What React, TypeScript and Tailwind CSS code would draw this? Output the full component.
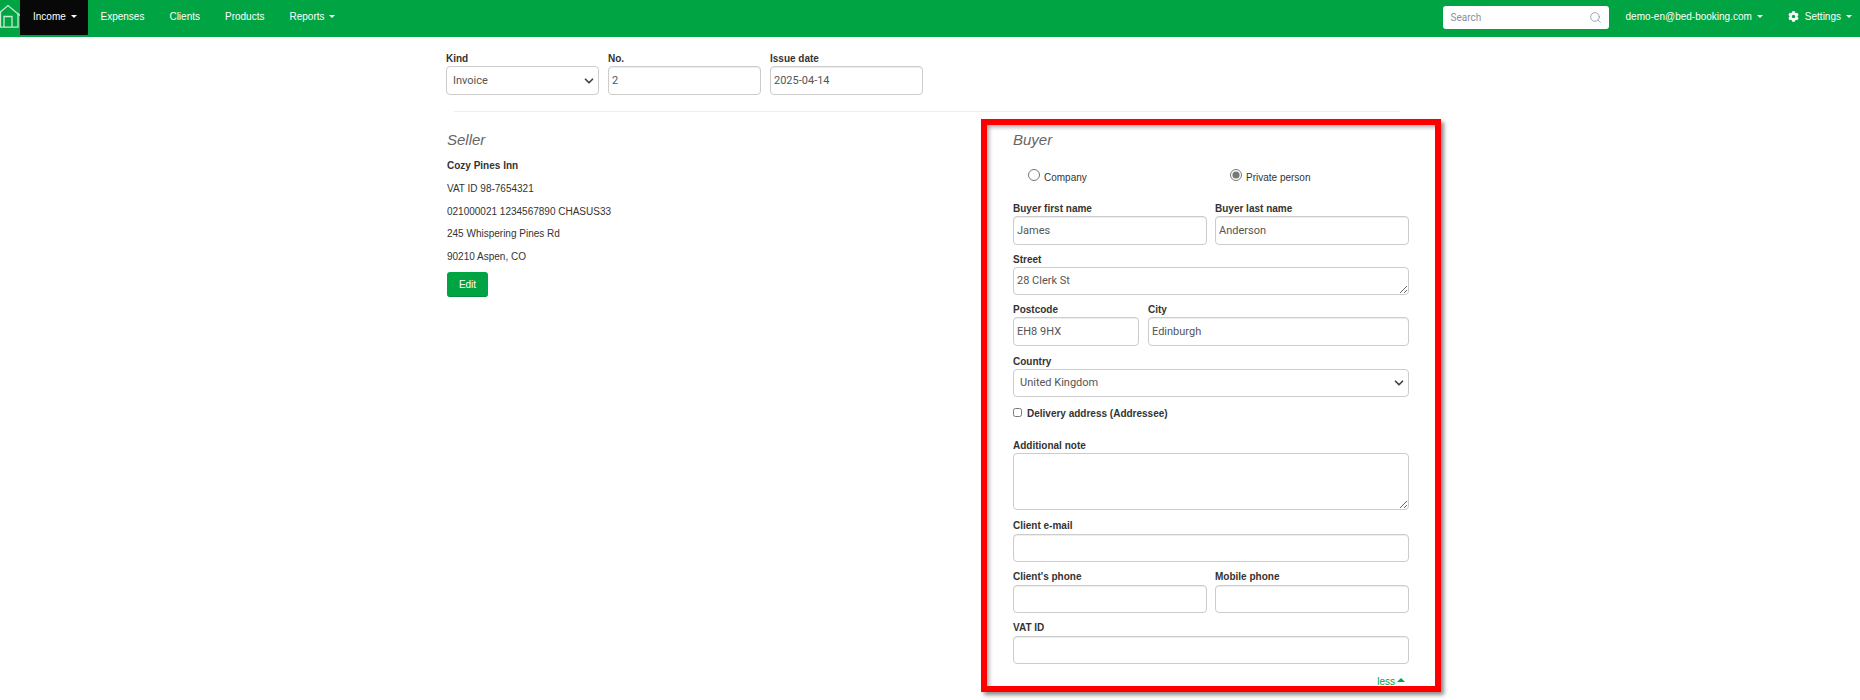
import { ChevronDown, Search } from "lucide-react";
import { FaCog } from "react-icons/fa";

function Caret({ up }: { up?: boolean }) {
  return up ? (
    <span className="inline-block w-0 h-0 border-x-[4px] border-x-transparent border-b-[4px] border-b-[#00a443]" />
  ) : (
    <span className="inline-block w-0 h-0 border-x-[3px] border-x-transparent border-t-[3px] border-t-white" />
  );
}

function NavItem({ label, caret }: { label: string; caret?: boolean }) {
  return (
    <a className="flex items-center gap-[5px] h-[32px] px-[12.5px] text-white">
      {label}
      {caret && <Caret />}
    </a>
  );
}

function Field({
  label,
  value,
  className,
  compact,
}: {
  label: string;
  value?: string;
  className?: string;
  compact?: boolean;
}) {
  return (
    <label className={`block ${className ?? ""}`}>
      <span className={`block font-bold text-[10px] text-[#333] ${compact ? "h-[15px] leading-[14px]" : "h-[14px] leading-[14px]"}`}>
        {label}
      </span>
      <input
        defaultValue={value}
        className={`block w-full px-[3px] bg-white border border-[#ccc] rounded-[4px] shadow-[inset_0_1px_1px_rgba(0,0,0,0.075)] font-['Roboto',sans-serif] text-[11px] text-[#555] ${compact ? "h-[28px]" : "h-[29px]"}`}
      />
    </label>
  );
}

function SelectField({ label, value, height }: { label: string; value: string; height: string }) {
  return (
    <label className="block">
      <span className="block h-[14px] leading-[14px] font-bold text-[10px] text-[#333]">{label}</span>
      <span className="relative block">
        <select
          defaultValue={value}
          className={`block w-full ${height} pl-[6px] pt-[1px] appearance-none bg-white border border-[#ccc] rounded-[4px] font-['Roboto',sans-serif] text-[11px] text-[#555]`}
        >
          <option>{value}</option>
        </select>
        <ChevronDown
          size={14}
          strokeWidth={3}
          className="absolute right-[3px] top-1/2 -translate-y-1/2 text-[#444] pointer-events-none"
        />
      </span>
    </label>
  );
}

function App() {
  return (
    <div className="min-h-[700px] bg-white font-['Liberation_Sans',Arial,sans-serif] text-[10px] text-[#333]">
      {/* Top bar */}
      <nav className="flex items-start h-[37px] bg-[#00a443] text-[10px]">
        <svg width="20" height="28" viewBox="0 0 20 28" className="shrink-0" fill="none" stroke="#c4eacf" strokeWidth="1.3">
          <path d="M-2 14 L8 5.5 L20 15.5" />
          <path d="M0.5 12 V27.2 H18 V13" />
          <path d="M4 27 V16.5 H12 V27" />
        </svg>
        <a className="flex items-center gap-[5px] w-[68px] h-[35px] pb-[3px] pl-[13px] bg-[#080808] text-white">
          Income
          <Caret />
        </a>
        <NavItem label="Expenses" />
        <NavItem label="Clients" />
        <NavItem label="Products" />
        <NavItem label="Reports" caret />

        <div className="ml-auto flex items-center h-[32px]">
          <div className="flex items-center w-[166px] h-[23px] mt-[3px] pl-[8px] pr-[7px] bg-white rounded-[3px]">
            <span className="flex-1 text-[#8a8f99] text-[10px] font-['Roboto',sans-serif]">Search</span>
            <Search size={13} strokeWidth={1.5} className="text-[#8a96a8]" />
          </div>
          <a className="flex items-center gap-[5px] ml-[17px] text-white">
            demo-en@bed-booking.com
            <Caret />
          </a>
          <a className="flex items-center ml-[25px] mr-[8px] text-white">
            <FaCog size={11} className="mr-[6px]" />
            Settings
            <span className="ml-[5px] flex items-center">
              <Caret />
            </span>
          </a>
        </div>
      </nav>

      <main className="w-[968px] mx-auto">
        {/* Document head */}
        <div className="flex gap-[9px] pt-[15px]">
          <div className="w-[153px]">
            <SelectField label="Kind" value="Invoice" height="h-[29px]" />
          </div>
          <Field label="No." value="2" className="w-[153px]" />
          <Field label="Issue date" value="2025-04-14" className="w-[153px]" />
        </div>

        <hr className="ml-[8px] mr-[14px] mt-[16px] border-t border-[#eee]" />

        <div className="flex">
          {/* Seller */}
          <section className="w-[535px] shrink-0 pl-[1px]">
            <h3 className="mt-[18px] text-[15px] leading-[20px] italic text-[#666]">Seller</h3>
            <p className="mt-[9px] leading-[13px] font-bold">Cozy Pines Inn</p>
            <p className="mt-[10px] leading-[13px]">VAT ID 98-7654321</p>
            <p className="mt-[10px] leading-[13px]">021000021 1234567890 CHASUS33</p>
            <p className="mt-[9px] leading-[13px]">245 Whispering Pines Rd</p>
            <p className="mt-[10px] leading-[13px]">90210 Aspen, CO</p>
            <button className="block mt-[9px] w-[41px] h-[25px] bg-[#00a443] border-b border-[#008f3a] rounded-[3px] text-white text-[10px]">
              Edit
            </button>
          </section>

          {/* Buyer */}
          <section className="w-[460px] h-[573px] shrink-0 mt-[7px] pl-[26px] pr-[26px] border-[6px] border-[#ff0000] shadow-[3px_3px_4px_rgba(0,0,0,0.45),inset_3px_3px_4px_-1px_rgba(0,0,0,0.35)]">
            <h3 className="mt-[5px] text-[15px] leading-[20px] italic text-[#666]">Buyer</h3>

            <div className="flex mt-[17px] h-[18px] text-[10px]">
              <label className="flex items-center w-[217px] pl-[15px]">
                <input type="radio" name="kind" className="m-0 w-[12px] h-[12px] mr-[4px] mb-[2px] accent-[#777]" />
                <span className="mt-[2px]">Company</span>
              </label>
              <label className="flex items-center">
                <input type="radio" name="kind" defaultChecked className="m-0 w-[12px] h-[12px] mr-[4px] mb-[2px] accent-[#777]" />
                <span className="mt-[2px]">Private person</span>
              </label>
            </div>

            <div className="flex gap-[8px] mt-[17px]">
              <Field label="Buyer first name" value="James" className="w-[194px]" />
              <Field label="Buyer last name" value="Anderson" className="w-[194px]" />
            </div>

            <label className="block mt-[8px]">
              <span className="block h-[14px] leading-[14px] font-bold text-[10px] text-[#333]">Street</span>
              <textarea
                defaultValue="28 Clerk St"
                className="block w-full h-[28px] px-[3px] py-[5px] bg-white border border-[#ccc] rounded-[4px] font-['Roboto',sans-serif] text-[11px] leading-[16px] text-[#555]"
              />
            </label>

            <div className="flex gap-[9px] mt-[8px]">
              <Field label="Postcode" value="EH8 9HX" className="w-[126px]" />
              <Field label="City" value="Edinburgh" className="w-[261px]" />
            </div>

            <div className="mt-[9px]">
              <SelectField label="Country" value="United Kingdom" height="h-[28px]" />
            </div>

            <label className="flex items-center mt-[10px] h-[13px] font-bold">
              <input type="checkbox" className="m-0 w-[9px] h-[9px] mr-[5px] mb-[2px]" />
              Delivery address (Addressee)
            </label>

            <label className="block mt-[19px]">
              <span className="block h-[14px] leading-[14px] font-bold text-[10px] text-[#333]">Additional note</span>
              <textarea className="block w-full h-[57px] bg-white border border-[#ccc] rounded-[4px]" />
            </label>

            <Field label="Client e-mail" compact className="mt-[9px]" />

            <div className="flex gap-[8px] mt-[8px]">
              <Field label="Client's phone" compact className="w-[194px]" />
              <Field label="Mobile phone" compact className="w-[194px]" />
            </div>

            <Field label="VAT ID" compact className="mt-[8px]" />

            <p className="flex items-center justify-end gap-[2px] mt-[11px] pr-[4px] text-[10px] leading-[13px] text-[#00a443]">
              less
              <span className="flex mb-[4px]">
                <Caret up />
              </span>
            </p>
          </section>
        </div>
      </main>
    </div>
  );
}

export default App;
